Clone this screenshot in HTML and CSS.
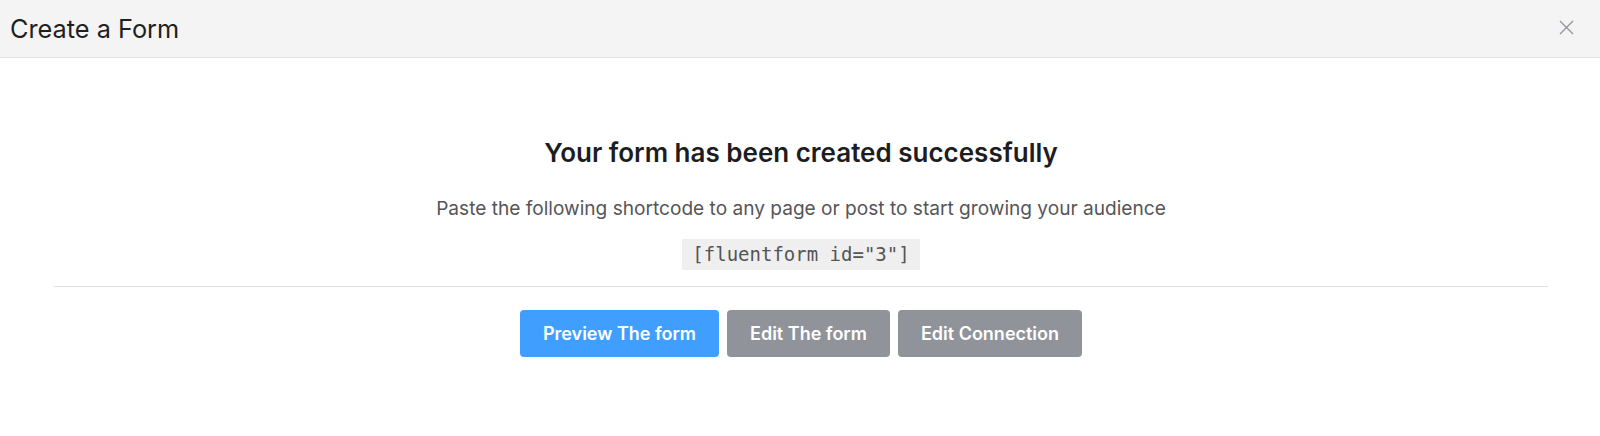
FILE: index.html
```html
<!DOCTYPE html>
<html>
<head>
<meta charset="utf-8">
<link rel="stylesheet" href="styles.css">
</head>
<body>
<div class="modal">
  <div class="modal-header">
    <h2 class="modal-title">Create a Form</h2>
    <button class="close-btn" aria-label="Close">
      <svg width="15" height="15" viewBox="0 0 15 15"><path d="M1 1 L14 14 M14 1 L1 14" stroke="#909399" stroke-width="1.3" fill="none"/></svg>
    </button>
  </div>
  <div class="modal-body">
    <h3 class="success-title">Your form has been created successfully</h3>
    <p class="success-text">Paste the following shortcode to any page or post to start growing your audience</p>
    <code class="shortcode">[fluentform id="3"]</code>
    <hr class="divider">
    <div class="actions">
      <button class="btn btn-primary">Preview The form</button>
      <button class="btn btn-info">Edit The form</button>
      <button class="btn btn-info">Edit Connection</button>
    </div>
  </div>
</div>
</body>
</html>
```
FILE: styles.css
```css
* { box-sizing: border-box; }
html, body { margin: 0; padding: 0; background: #fff; }
body { font-family: "Inter", "Liberation Sans", sans-serif; width: 1600px; height: 436px; overflow: hidden; }
.modal { display: flex; flex-direction: column; }
.modal-header {
  height: 58px;
  background: #f4f4f4;
  border-bottom: 1px solid #e3e3e3;
  display: flex;
  align-items: center;
  justify-content: space-between;
  padding: 0 26px 0 10px;
}
.modal-title { margin: 0; font-size: 25.3px; font-weight: 400; color: #1f1f1f; line-height: 30px; }
.close-btn { border: 0; background: transparent; padding: 0; width: 15px; height: 15px; display: flex; cursor: pointer; margin-top: -3px; }
.modal-body { display: flex; flex-direction: column; align-items: center; padding: 79px 52px 0 54px; }
.success-title { margin: 0; font-size: 26px; font-weight: 600; line-height: 32px; color: #1d1d1f; }
.success-text { margin: 27px 0 0; font-size: 19.1px; line-height: 24px; color: #555558; }
.shortcode {
  margin-top: 19px;
  display: block;
  background: #efefef;
  color: #555;
  font-family: "DejaVu Sans Mono", "Liberation Mono", monospace;
  font-size: 19px;
  line-height: 31px;
  height: 31px;
  padding: 0 10px;
}
.divider { width: 100%; margin: 16px 0 0; border: 0; border-top: 1px solid #e2e2e2; height: 0; }
.actions { display: flex; gap: 8px; margin-top: 23px; }
.btn {
  height: 47px;
  border: 0;
  border-radius: 4px;
  color: #fff;
  font-family: "Inter", "Liberation Sans", sans-serif;
  font-size: 18px;
  font-weight: 600;
  padding: 0 23px;
}
.btn-primary { background: #409eff; }
.btn-info { background: #909399; }
```
